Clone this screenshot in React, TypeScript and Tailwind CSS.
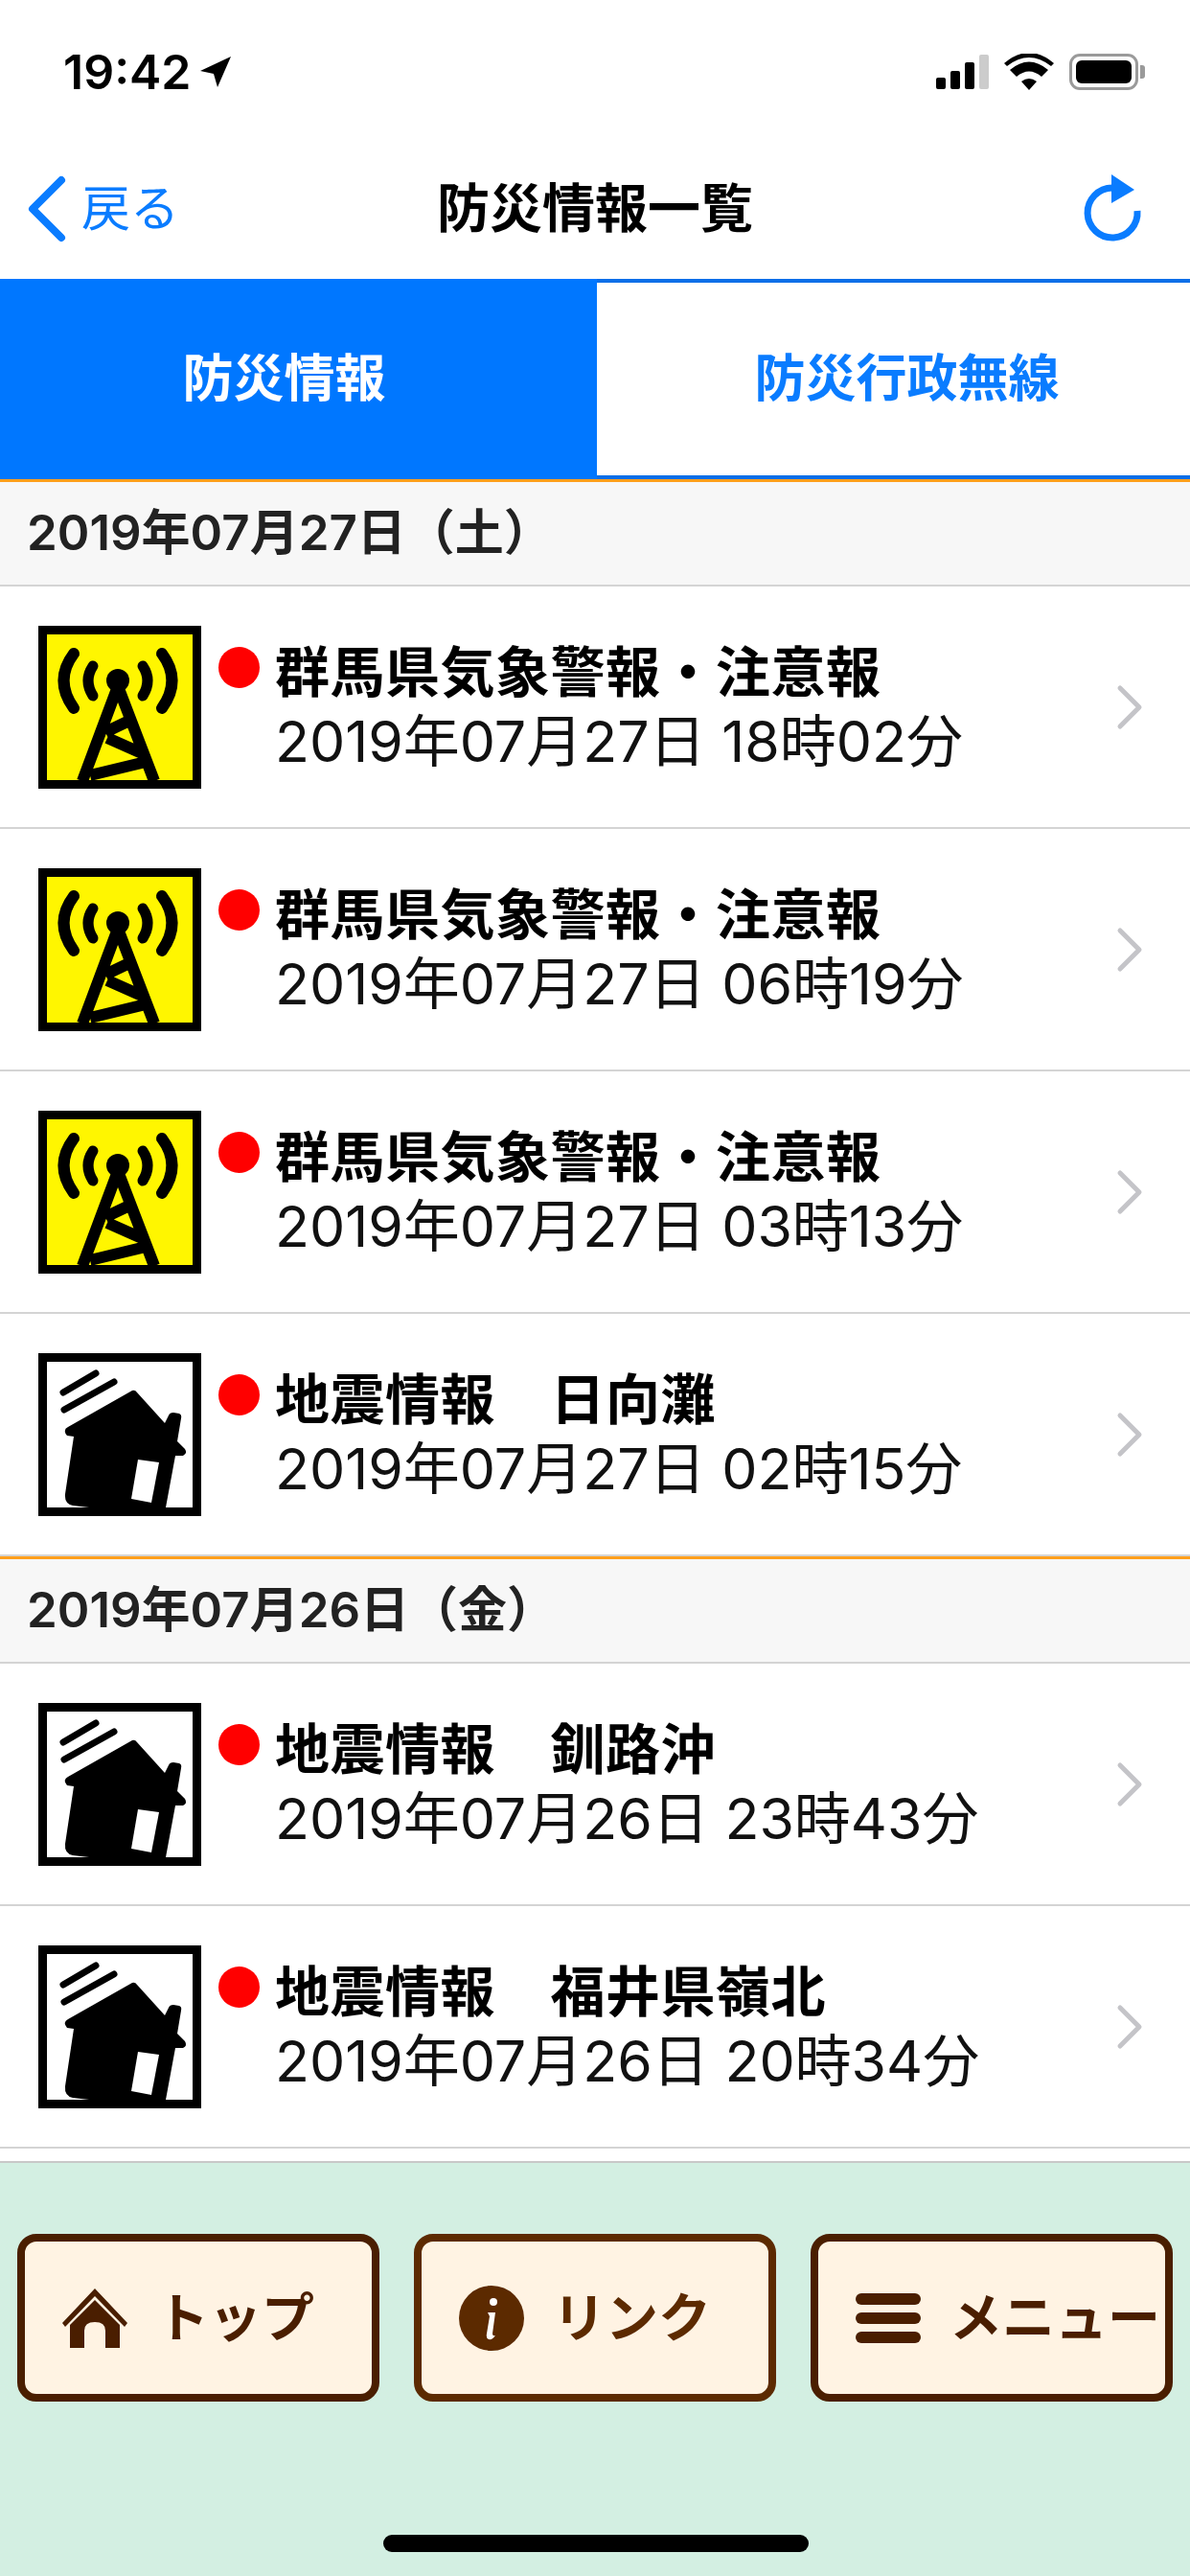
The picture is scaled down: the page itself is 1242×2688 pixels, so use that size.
const font = "font-['Inter','Noto_Sans_CJK_JP',sans-serif]";

function TowerIcon() {
  return (
    <svg viewBox="0 0 170 170" className="w-[170px] h-[170px] shrink-0">
      <rect x="4.5" y="4.5" width="161" height="161" fill="#fff600" stroke="#000" strokeWidth="9" />
      <g fill="none" stroke="#000" strokeLinecap="round">
        <path d="M37 29Q16 57 37 86M129 29Q150 57 129 86" strokeWidth="12" />
        <path d="M57 42Q47 57 57 73M109 42Q119 57 109 73" strokeWidth="11" />
        <path d="M83 63L46 162M83 63L121 162M70 111L95 99M72 117L108 133M108 143L54 156" strokeWidth="12" strokeLinecap="butt" />
      </g>
      <circle cx="83" cy="57" r="12" fill="#000" />
    </svg>
  );
}

function HouseIcon() {
  return (
    <svg viewBox="0 0 170 170" className="w-[170px] h-[170px] shrink-0">
      <rect x="4.5" y="4.5" width="161" height="161" fill="#fff" stroke="#000" strokeWidth="9" />
      <path
        d="M98 39Q101 38 103 41L132 73L136 65Q137 62 141 62L147 63Q150 64 149 68L145 92L153 100Q156 105 151 107L143 107L133 161L53 161L36 159Q27 157 28 147L37 87L30 86Q25 80 31 77Z"
        fill="#000"
      />
      <path d="M104 111L126 114L118 156L97 152Z" fill="#fff" />
      <path d="M26 41L60 21" stroke="#000" strokeWidth="7" strokeLinecap="round" />
      <path d="M27 59L79 30" stroke="#000" strokeWidth="7" strokeLinecap="round" />
    </svg>
  );
}

function Row({ icon, title, time }: { icon: 'tower' | 'house'; title: string; time: string }) {
  return (
    <div className="h-[253px] bg-white border-b-2 border-[#d4d4d4] flex items-center pl-[40px] pr-[49px]">
      {icon === 'tower' ? <TowerIcon /> : <HouseIcon />}
      <div className="ml-[18px] mb-[82px] w-[43px] h-[43px] rounded-full bg-[#ff0000] shrink-0"></div>
      <div className="ml-[16px] flex-1">
        <div className="text-[57px] leading-[72px] font-bold tracking-[0.5px] text-black">{title}</div>
        <div className="text-[59px] leading-[72px] text-[#111]">{time}</div>
      </div>
      <svg viewBox="0 0 28 48" className="w-[28px] h-[48px] shrink-0">
        <path d="M4 4L24 24L4 44" fill="none" stroke="#c4c4c8" strokeWidth="5" strokeLinecap="round" strokeLinejoin="round" />
      </svg>
    </div>
  );
}

function DateHeader({ label }: { label: string }) {
  return (
    <div className="h-[109px] bg-[#f7f7f7] border-b-2 border-[#d4d4d4] flex items-center pl-[28px] text-[51px] font-semibold text-[#222]">
      {label}
    </div>
  );
}

function FooterButton({ icon, label, color }: { icon: React.ReactNode; label: string; color: string }) {
  return (
    <div
      className="w-[378px] h-[175px] rounded-[20px] border-[8px] bg-[#fff3e3] flex items-center pl-[39px] gap-[30px] whitespace-nowrap text-[55px] font-bold"
      style={{ borderColor: color, color }}
    >
      {icon}
      <span>{label}</span>
    </div>
  );
}

export default function App() {
  return (
    <div className={`${font} w-[1242px] h-[2688px] bg-white flex flex-col overflow-hidden`}>
      {/* status bar */}
      <div className="h-[145px] shrink-0 flex items-start justify-between pt-[48px] pl-[66px] pr-[47px]">
        <div className="flex items-center gap-[8px]">
          <span className="text-[50px] leading-[54px] font-semibold text-black">19:42</span>
          <svg viewBox="0 0 34 34" className="w-[34px] h-[34px]">
            <path d="M33 1L19 33L15 19L1 16Z" fill="#000" />
          </svg>
        </div>
        <div className="flex items-center gap-[16px] pt-[8px]">
          <div className="flex items-end gap-[5px] h-[36px]">
            <div className="w-[10px] h-[12px] rounded-[2px] bg-black"></div>
            <div className="w-[10px] h-[19px] rounded-[2px] bg-black"></div>
            <div className="w-[10px] h-[28px] rounded-[2px] bg-black"></div>
            <div className="w-[10px] h-[36px] rounded-[2px] bg-[#cccccc]"></div>
          </div>
          <svg viewBox="0 0 52 38" className="w-[52px] h-[38px]">
            <path d="M26 38L18 29Q26 23 34 29ZM13 24L6 17Q26 0 46 17L39 24Q26 13 13 24Z" fill="#000" />
            <path d="M3 13L0 10Q26 -12 52 10L49 13Q26 -5 3 13Z" fill="#000" />
          </svg>
          <div className="flex items-center gap-[2px]">
            <div className="w-[72px] h-[38px] rounded-[11px] border-[3px] border-[#9a9a9a] p-[4px]">
              <div className="w-full h-full rounded-[6px] bg-black"></div>
            </div>
            <div className="w-[5px] h-[14px] rounded-r-[3px] bg-[#9a9a9a]"></div>
          </div>
        </div>
      </div>

      {/* nav bar */}
      <div className="relative h-[146px] shrink-0 flex items-center justify-between pl-[28px] pr-[50px]">
        <div className="flex items-center gap-[15px] text-[51px] text-[#0a7cff]">
          <svg viewBox="0 0 42 70" className="w-[42px] h-[70px]">
            <path d="M36 5L6 35L36 65" fill="none" stroke="#0a7cff" strokeWidth="8" strokeLinecap="round" strokeLinejoin="round" />
          </svg>
          <span>戻る</span>
        </div>
        <div className="absolute left-0 right-0 bottom-[36px] text-center text-[55px] leading-[76px] font-bold text-black">防災情報一覧</div>
        <svg viewBox="0 0 62 72" className="w-[62px] h-[72px]">
          <path d="M57 38A26 26 0 1 1 31 14" fill="none" stroke="#0a7cff" strokeWidth="7" strokeLinecap="butt" />
          <path d="M30 0L54 16L30 30Z" fill="#0a7cff" />
        </svg>
      </div>

      {/* tabs */}
      <div className="h-[212px] shrink-0 flex border-b-[3px] border-[#ff9f1c]">
        <div className="w-[623px] bg-[#0077ff] flex items-center justify-center pr-[30px] text-[53px] font-bold text-white">防災情報</div>
        <div className="flex-1 bg-white border-y-[4px] border-[#0a6fe8] flex items-center justify-center pl-[28px] text-[53px] font-bold text-[#0a7cff]">防災行政無線</div>
      </div>

      {/* list */}
      <div className="flex-1 overflow-hidden bg-white">
        <DateHeader label="2019年07月27日（土）" />
        <Row icon="tower" title="群馬県気象警報・注意報" time="2019年07月27日 18時02分" />
        <Row icon="tower" title="群馬県気象警報・注意報" time="2019年07月27日 06時19分" />
        <Row icon="tower" title="群馬県気象警報・注意報" time="2019年07月27日 03時13分" />
        <div className="border-b-[3px] border-[#ff9f1c]">
          <Row icon="house" title="地震情報　日向灘" time="2019年07月27日 02時15分" />
        </div>
        <DateHeader label="2019年07月26日（金）" />
        <Row icon="house" title="地震情報　釧路沖" time="2019年07月26日 23時43分" />
        <Row icon="house" title="地震情報　福井県嶺北" time="2019年07月26日 20時34分" />
      </div>

      {/* footer */}
      <div className="relative h-[433px] shrink-0 bg-[#d3efe2] border-t-2 border-[#c8c8c8] pt-[74px] px-[18px]">
        <div className="flex justify-between">
          <FooterButton
            label="トップ"
            color="#4a1e00"
            icon={
              <svg viewBox="0 0 68 62" className="w-[68px] h-[62px] shrink-0">
                <path d="M34 0L68 36L65 40L34 8L3 40L0 36Z" fill="#4a1e00" />
                <path d="M34 12L60 38V62H45V44Q45 35 34 35Q23 35 23 44V62H8V38Z" fill="#4a1e00" />
              </svg>
            }
          />
          <FooterButton
            label="リンク"
            color="#5c2a00"
            icon={
              <svg viewBox="0 0 68 68" className="w-[68px] h-[68px] shrink-0">
                <circle cx="34" cy="34" r="34" fill="#5c2a00" />
                <circle cx="36" cy="17" r="4" fill="#fff" />
                <path d="M30 28H38L35 50Q35 53 38 52Q35 57 31 56Q28 55 29 50L32 32Z" fill="#fff" />
              </svg>
            }
          />
          <FooterButton
            label="メニュー"
            color="#4a1e00"
            icon={
              <div className="w-[68px] shrink-0 flex flex-col gap-[8px]">
                <div className="h-[12px] rounded-full bg-[#4a1e00]"></div>
                <div className="h-[12px] rounded-full bg-[#4a1e00]"></div>
                <div className="h-[12px] rounded-full bg-[#4a1e00]"></div>
              </div>
            }
          />
        </div>
        <div className="absolute left-[400px] top-[388px] w-[444px] h-[18px] rounded-full bg-black"></div>
      </div>
    </div>
  );
}
